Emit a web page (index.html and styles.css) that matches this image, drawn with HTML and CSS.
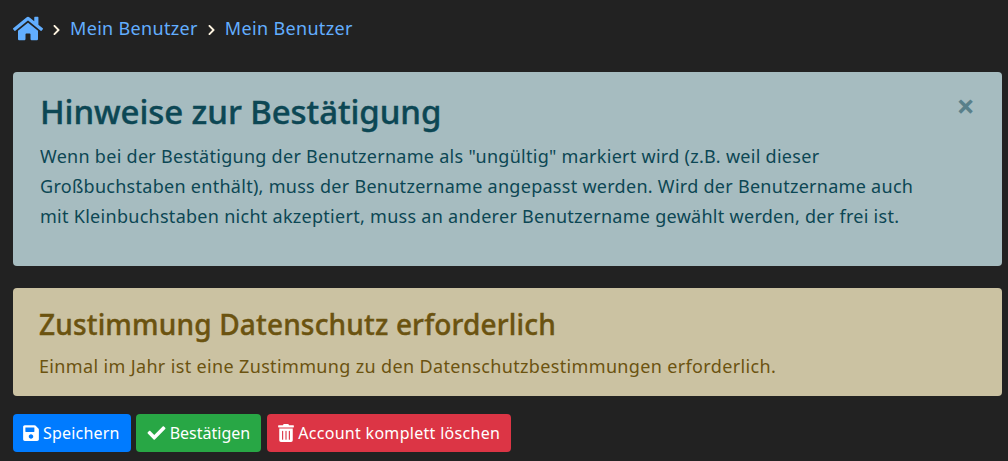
FILE: index.html
```html
<!DOCTYPE html>
<html lang="de">
<head>
    <meta charset="UTF-8">
    <meta name="viewport" content="width=device-width, initial-scale=1.0">
    <title>Mein Benutzer</title>
    <link rel="stylesheet" href="styles.css">
</head>
<body>

    <nav class="breadcrumb">
        <a href="#" class="home-link">
            <svg class="icon-home" viewBox="0 0 576 512"><path d="M280.37 148.26L96 300.11V464a16 16 0 0 0 16 16l112.06-.29a16 16 0 0 0 15.92-16V368a16 16 0 0 1 16-16h64a16 16 0 0 1 16 16v95.64a16 16 0 0 0 16 16.05L464 480a16 16 0 0 0 16-16V300L295.67 148.26a12.19 12.19 0 0 0-15.3 0zM571.6 251.47L488 182.56V44.05a12 12 0 0 0-12-12h-56a12 12 0 0 0-12 12v72.61L318.47 43a48 48 0 0 0-61 0L4.34 251.47a12 12 0 0 0-1.6 16.9l25.5 31A12 12 0 0 0 45.15 301l235.22-193.74a12.19 12.19 0 0 1 15.3 0L530.9 301a12 12 0 0 0 16.9-1.6l25.5-31a12 12 0 0 0-1.7-16.93z"/></svg>
        </a>
        <svg class="icon-sep" viewBox="0 0 320 512"><path d="M285.476 272.971L91.132 467.314c-9.373 9.373-24.569 9.373-33.941 0l-22.667-22.667c-9.357-9.357-9.375-24.522-.04-33.901L188.505 256 34.484 101.255c-9.335-9.379-9.317-24.544.04-33.901l22.667-22.667c9.373-9.373 24.569-9.373 33.941 0L285.475 239.03c9.373 9.372 9.373 24.568.001 33.941z"/></svg>
        <a href="#">Mein Benutzer</a>
        <svg class="icon-sep" viewBox="0 0 320 512"><path d="M285.476 272.971L91.132 467.314c-9.373 9.373-24.569 9.373-33.941 0l-22.667-22.667c-9.357-9.357-9.375-24.522-.04-33.901L188.505 256 34.484 101.255c-9.335-9.379-9.317-24.544.04-33.901l22.667-22.667c9.373-9.373 24.569-9.373 33.941 0L285.475 239.03c9.373 9.372 9.373 24.568.001 33.941z"/></svg>
        <a href="#">Mein Benutzer</a>
    </nav>

    <div class="alert alert-info">
        <span class="close">&times;</span>
        <h2>Hinweise zur Bestätigung</h2>
        <p>Wenn bei der Bestätigung der Benutzername als "ungültig" markiert wird (z.B. weil dieser<br>Großbuchstaben enthält), muss der Benutzername angepasst werden. Wird der Benutzername auch<br>mit Kleinbuchstaben nicht akzeptiert, muss an anderer Benutzername gewählt werden, der frei ist.</p>
    </div>

    <div class="alert alert-warning">
        <h3>Zustimmung Datenschutz erforderlich</h3>
        <p>Einmal im Jahr ist eine Zustimmung zu den Datenschutzbestimmungen erforderlich.</p>
    </div>

    <div class="buttons">
        <button class="btn btn-blue">
            <svg class="icon" viewBox="0 0 448 512"><path d="M433.941 129.941l-83.882-83.882A48 48 0 0 0 316.118 32H48C21.49 32 0 53.49 0 80v352c0 26.51 21.49 48 48 48h352c26.51 0 48-21.49 48-48V163.882a48 48 0 0 0-14.059-33.941zM224 416c-35.346 0-64-28.654-64-64 0-35.346 28.654-64 64-64s64 28.654 64 64c0 35.346-28.654 64-64 64zm96-304.52V212c0 6.627-5.373 12-12 12H76c-6.627 0-12-5.373-12-12V108c0-6.627 5.373-12 12-12h228.52c3.183 0 6.235 1.264 8.485 3.515l3.48 3.48A11.996 11.996 0 0 1 320 111.48z"/></svg>
            Speichern
        </button>
        <button class="btn btn-green">
            <svg class="icon icon-check" viewBox="0 0 512 512"><path d="M173.898 439.404l-166.4-166.4c-9.997-9.997-9.997-26.206 0-36.204l36.203-36.204c9.997-9.998 26.207-9.998 36.204 0L192 312.69 432.095 72.596c9.997-9.997 26.207-9.997 36.204 0l36.203 36.204c9.997 9.997 9.997 26.206 0 36.204l-294.4 294.401c-9.998 9.997-26.207 9.997-36.204-.001z"/></svg>
            Bestätigen
        </button>
        <button class="btn btn-red">
            <svg class="icon" viewBox="0 0 448 512"><path d="M32 464a48 48 0 0 0 48 48h288a48 48 0 0 0 48-48V128H32zm272-256a16 16 0 0 1 32 0v224a16 16 0 0 1-32 0zm-96 0a16 16 0 0 1 32 0v224a16 16 0 0 1-32 0zm-96 0a16 16 0 0 1 32 0v224a16 16 0 0 1-32 0zM432 32H312l-9.4-18.7A24 24 0 0 0 281.1 0H166.8a23.72 23.72 0 0 0-21.4 13.3L136 32H16A16 16 0 0 0 0 48v32a16 16 0 0 0 16 16h416a16 16 0 0 0 16-16V48a16 16 0 0 0-16-16z"/></svg>
            Account komplett löschen
        </button>
    </div>

</body>
</html>
```

FILE: styles.css
```css
body {
    font-family: "Noto Sans", "Open Sans", sans-serif;
    font-size: 16px;
    line-height: 24px;
    background: #222222;
    margin: 0;
    padding: 0 6px 0 13px;
    height: 461px;
    overflow: hidden;
    box-sizing: border-box;
}
a {
    color: #62aeff;
    text-decoration: none;
}
.breadcrumb {
    display: flex;
    align-items: center;
    height: 56px;
    margin-bottom: 16px;
    font-size: 18px;
    letter-spacing: 0.33px;
}
.home-link {
    display: flex;
}
.icon-home {
    width: 30px;
    height: 27px;
    fill: #62aeff;
}
.icon-sep {
    width: 9px;
    height: 12px;
    fill: #fdf3e0;
    margin: 3px 9px 0 9px;
}
.alert {
    border-radius: 4px;
    position: relative;
    box-sizing: border-box;
}
.alert p {
    margin: 0;
}
.alert-info {
    background: #a6bcc0;
    color: #0c4754;
    height: 194px;
    padding: 19px 27px;
    margin-bottom: 22px;
    font-size: 18px;
    line-height: 30px;
    letter-spacing: 0.28px;
}
.alert-info h2 {
    font-size: 33px;
    font-weight: 500;
    line-height: 42px;
    letter-spacing: -0.08px;
    -webkit-text-stroke: 0.4px;
    margin: 0 0 8px;
}
.close {
    position: absolute;
    top: 14px;
    right: 27px;
    font-size: 32px;
    font-weight: 700;
    line-height: 40px;
    color: #59808a;
}
.alert-warning {
    background: #cbc2a2;
    color: #6b5310;
    height: 108px;
    padding: 16px 26px;
    margin-bottom: 18px;
    font-size: 18px;
    line-height: 30px;
    letter-spacing: 0.35px;
}
.alert-warning h3 {
    font-size: 28px;
    font-weight: 500;
    line-height: 40px;
    letter-spacing: 0.17px;
    -webkit-text-stroke: 0.4px;
    margin: 0 0 7px;
}
.buttons {
    display: flex;
    gap: 5px;
}
.btn {
    display: flex;
    align-items: center;
    gap: 4px;
    height: 38px;
    padding: 0 11px 0 10px;
    border: none;
    border-radius: 4px;
    color: white;
    font-family: inherit;
    font-size: 16px;
    letter-spacing: 0.2px;
    cursor: pointer;
}
.btn-blue {
    background: #007bff;
}
.btn-green {
    background: #28a745;
    letter-spacing: 0;
    padding: 0 11px;
}
.btn-red {
    background: #dc3545;
    letter-spacing: 0.3px;
    padding-left: 11px;
    margin-left: 1px;
}
.icon {
    width: 16px;
    height: 18px;
    fill: white;
}
.icon-check {
    width: 19px;
}
```
